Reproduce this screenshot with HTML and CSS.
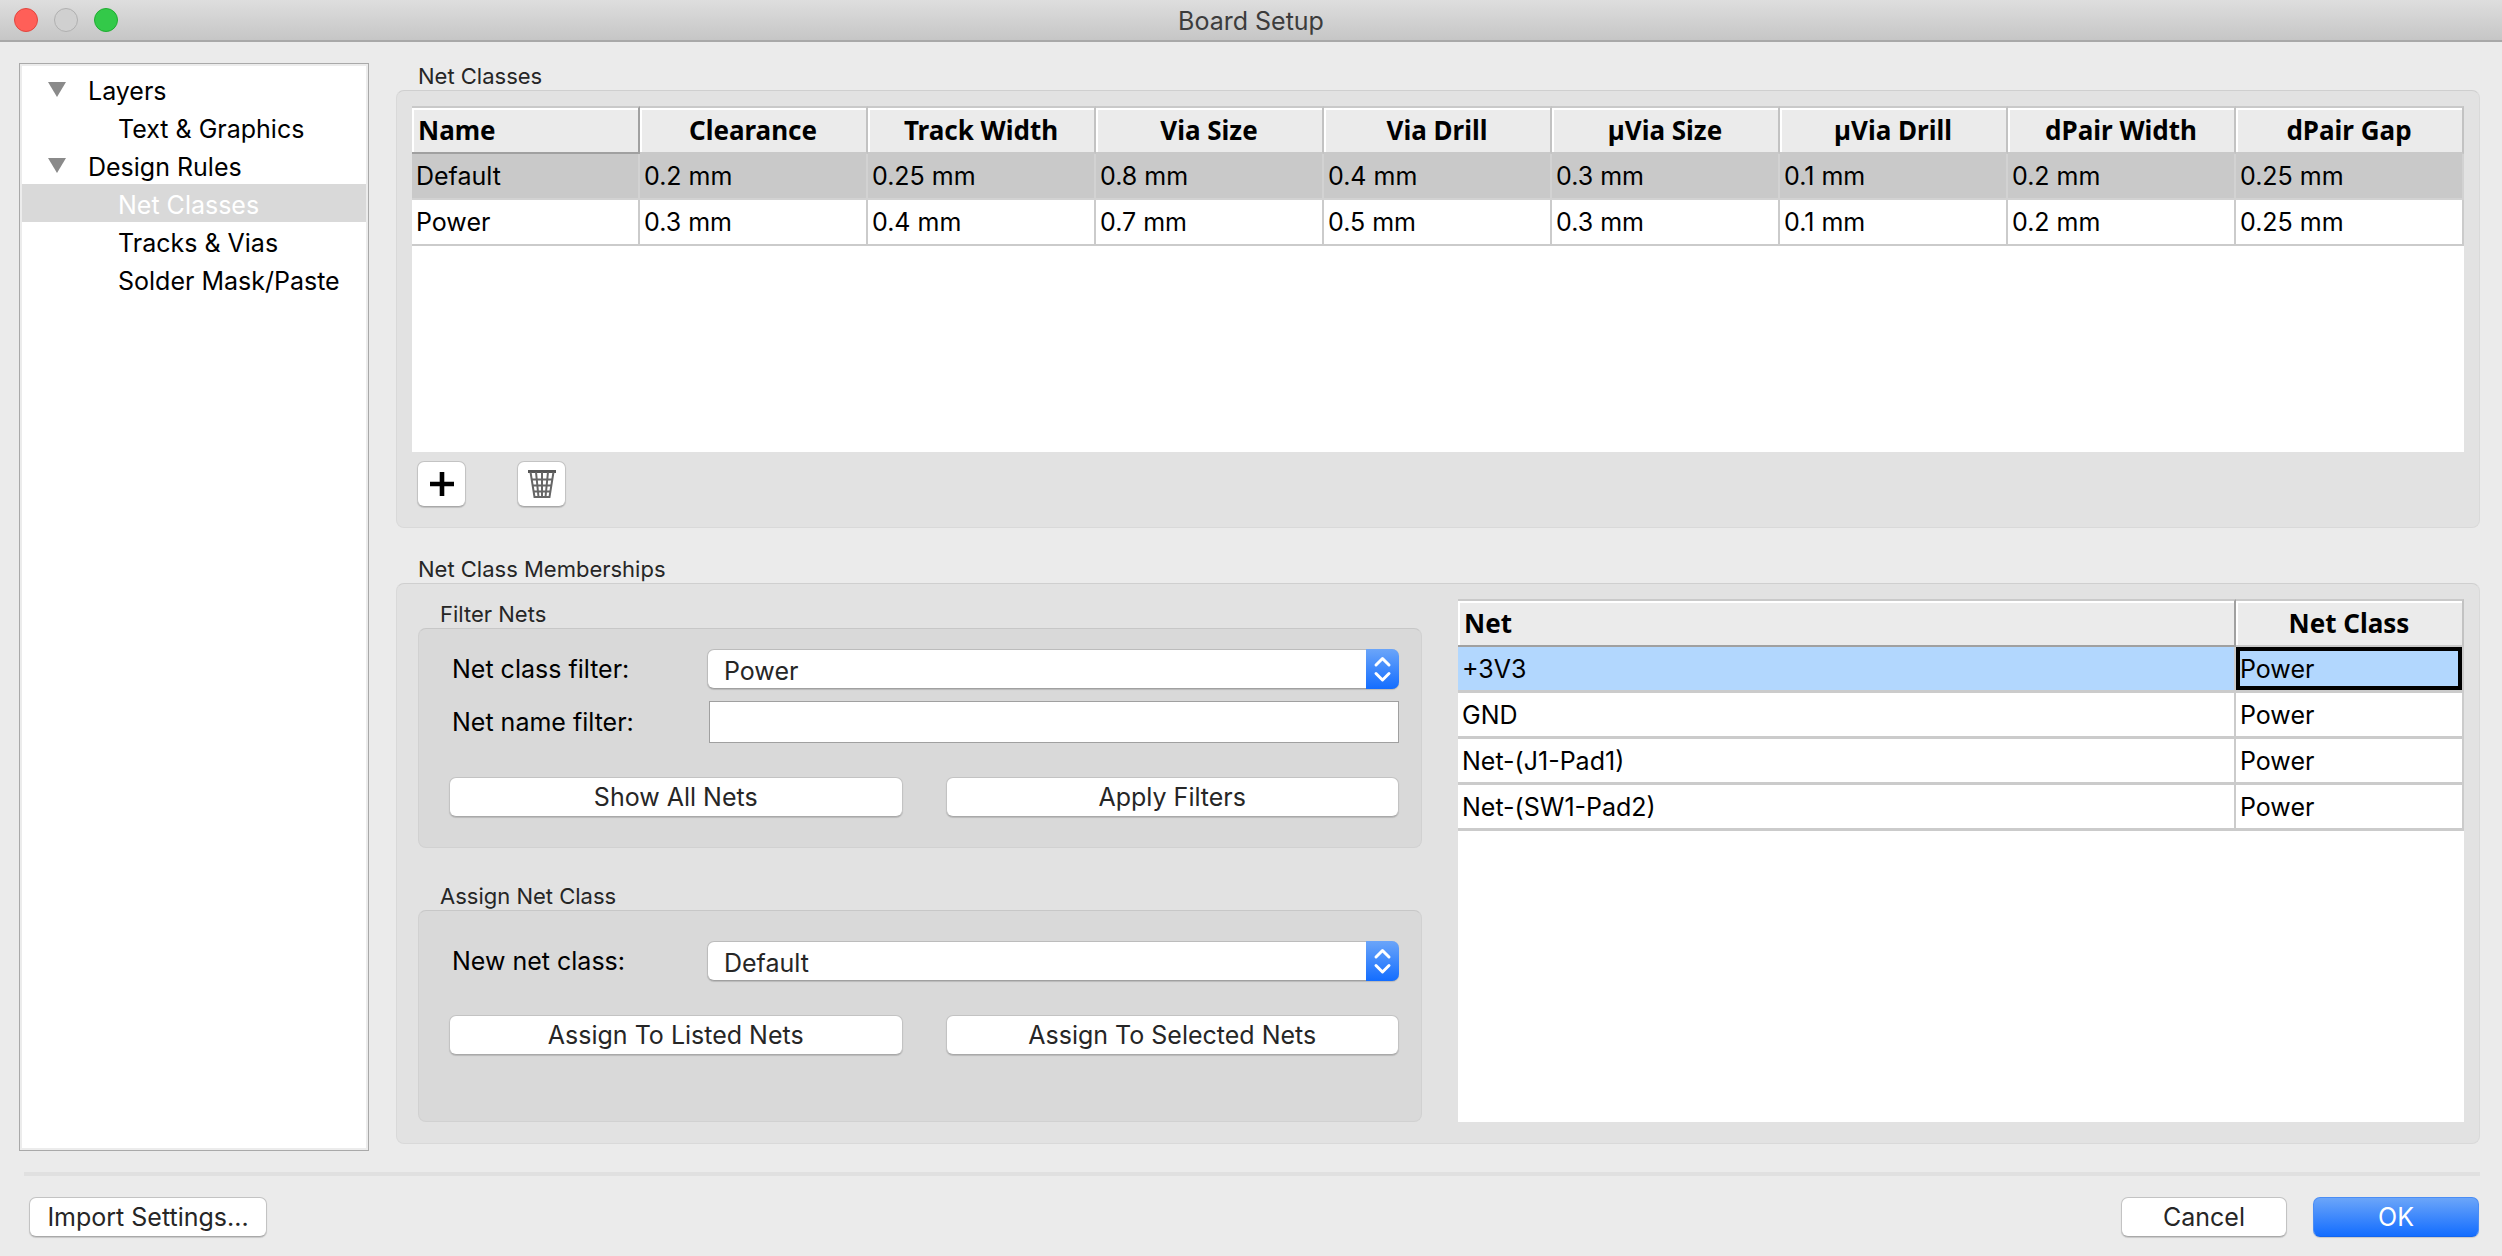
FILE: index.html
```html
<!DOCTYPE html>
<html lang="en">
<head>
<meta charset="utf-8">
<title>Board Setup</title>
<link rel="stylesheet" href="styles.css">
</head>
<body>
<header class="titlebar">
  <div class="lights">
    <button class="light light-close" aria-label="Close"></button>
    <button class="light light-off" aria-label="Minimize" disabled></button>
    <button class="light light-zoom" aria-label="Zoom"></button>
  </div>
  <h1 class="title">Board Setup</h1>
</header>

<main class="content">
  <nav class="tree" aria-label="Settings pages">
    <ul class="tree-list">
      <li>
        <button class="node"><svg class="arrow" viewBox="0 0 18 15"><path d="M0 0H18L9 15Z"/></svg>Layers</button>
        <ul class="tree-list">
          <li><button class="node leaf">Text &amp; Graphics</button></li>
        </ul>
      </li>
      <li>
        <button class="node"><svg class="arrow" viewBox="0 0 18 15"><path d="M0 0H18L9 15Z"/></svg>Design Rules</button>
        <ul class="tree-list">
          <li><button class="node leaf selected" aria-current="page">Net Classes</button></li>
          <li><button class="node leaf">Tracks &amp; Vias</button></li>
          <li><button class="node leaf">Solder Mask/Paste</button></li>
        </ul>
      </li>
    </ul>
  </nav>

  <div class="page">
    <section class="section">
      <h2 class="caption">Net Classes</h2>
      <div class="group classes">
        <div class="sheet classes-sheet">
          <table class="grid classes-grid">
            <thead>
              <tr><th class="current">Name</th><th>Clearance</th><th>Track Width</th><th>Via Size</th><th>Via Drill</th><th>µVia Size</th><th>µVia Drill</th><th>dPair Width</th><th>dPair Gap</th></tr>
            </thead>
            <tbody>
              <tr class="row-selected"><td>Default</td><td>0.2 mm</td><td>0.25 mm</td><td>0.8 mm</td><td>0.4 mm</td><td>0.3 mm</td><td>0.1 mm</td><td>0.2 mm</td><td>0.25 mm</td></tr>
              <tr><td>Power</td><td>0.3 mm</td><td>0.4 mm</td><td>0.7 mm</td><td>0.5 mm</td><td>0.3 mm</td><td>0.1 mm</td><td>0.2 mm</td><td>0.25 mm</td></tr>
            </tbody>
          </table>
        </div>
        <div class="tools">
          <button class="tool" aria-label="Add net class">
            <svg width="28" height="28" viewBox="0 0 28 28"><path d="M14 2V26M2 14H26" stroke="#000" stroke-width="4.600" fill="none"/></svg>
          </button>
          <button class="tool" aria-label="Delete net class">
            <svg width="28" height="28" viewBox="0 0 28 28" fill="none" stroke="#666"><path d="M0 1.500H28" stroke="#555" stroke-width="3"/><path d="M2.500 2L6.500 27H21.500L25.500 2" stroke-width="2"/><path d="M8 2L10.500 27M14 2V27M20 2L17.500 27M3 9.500H25M4 15.500H24M5 21.500H23" stroke-width="2"/></svg>
          </button>
        </div>
      </div>
    </section>

    <section class="section section-fill">
      <h2 class="caption">Net Class Memberships</h2>
      <div class="group members">
        <div class="forms">
          <section class="section">
            <h3 class="caption">Filter Nets</h3>
            <form class="group inner filter">
              <div class="field">
                <label for="class-filter">Net class filter:</label>
                <div class="popup">
                  <select id="class-filter"><option>Power</option><option>Default</option></select>
                  <svg class="cap" viewBox="0 0 33 40"><path d="M10 16L16.500 9.500L23 16M10 24.500L16.500 31L23 24.500"/></svg>
                </div>
              </div>
              <div class="field">
                <label for="name-filter">Net name filter:</label>
                <input class="text" id="name-filter" type="text">
              </div>
              <div class="pair">
                <button class="push" type="button">Show All Nets</button>
                <button class="push" type="button">Apply Filters</button>
              </div>
            </form>
          </section>
          <section class="section section-fill">
            <h3 class="caption">Assign Net Class</h3>
            <form class="group inner assign">
              <div class="field">
                <label for="new-class">New net class:</label>
                <div class="popup">
                  <select id="new-class"><option>Default</option><option>Power</option></select>
                  <svg class="cap" viewBox="0 0 33 40"><path d="M10 16L16.500 9.500L23 16M10 24.500L16.500 31L23 24.500"/></svg>
                </div>
              </div>
              <div class="pair">
                <button class="push" type="button">Assign To Listed Nets</button>
                <button class="push" type="button">Assign To Selected Nets</button>
              </div>
            </form>
          </section>
        </div>
        <div class="sheet nets-sheet">
          <table class="grid nets-grid">
            <colgroup><col><col class="col-class"></colgroup>
            <thead>
              <tr><th class="current">Net</th><th>Net Class</th></tr>
            </thead>
            <tbody>
              <tr class="row-active"><td>+3V3</td><td class="cursor">Power</td></tr>
              <tr><td>GND</td><td>Power</td></tr>
              <tr><td>Net-(J1-Pad1)</td><td>Power</td></tr>
              <tr><td>Net-(SW1-Pad2)</td><td>Power</td></tr>
            </tbody>
          </table>
        </div>
      </div>
    </section>
  </div>
</main>

<footer class="footer">
  <button class="push import">Import Settings...</button>
  <div class="actions">
    <button class="push action">Cancel</button>
    <button class="push action primary">OK</button>
  </div>
</footer>
</body>
</html>
```
FILE: styles.css
```css
* { box-sizing: border-box; }

body {
  margin: 0;
  min-height: 100vh;
  display: flex;
  flex-direction: column;
  background: #ebebeb;
  color: #000;
  font: 25px/38px Inter, "Liberation Sans", sans-serif;
}

button, input, select { font: inherit; color: inherit; margin: 0; }
h1, h2, h3, ul { margin: 0; padding: 0; font-weight: 400; }

/* Title bar */
.titlebar {
  display: grid;
  grid-template-columns: 1fr auto 1fr;
  align-items: center;
  height: 42px;
  padding: 0 14px;
  background: linear-gradient(#dedede, #c6c6c6);
  border-bottom: 2px solid #a8a8a8;
}
.lights { display: flex; gap: 16px; }
.light { width: 24px; height: 24px; padding: 0; border-radius: 50%; border: 1px solid; }
.light-close { background: #ff5f58; border-color: #e2463f; }
.light-off { background: #d0d0d0; border-color: #b0b0b0; }
.light-zoom { background: #33c949; border-color: #1fad31; }
.title { padding-top: 2px; font-size: 25px; color: #3c3c3c; }

.content { flex: 1; display: flex; gap: 27px; padding: 21px 22px 21px 19px; }

/* Page tree */
.tree {
  width: 350px;
  flex: none;
  padding: 6px 2px;
  background: #fff;
  border: 1px solid #a9a9a9;
  box-shadow: inset 0 0 0 2px #ececec;
}
.tree-list { list-style: none; }
.node {
  display: flex;
  width: 100%;
  height: 38px;
  padding: 2px 0 0 26px;
  border: 0;
  background: none;
  text-align: left;
}
.leaf { padding-left: 96px; }
.selected { background: #d9d9d9; color: #fff; }
.arrow { width: 18px; height: 15px; margin: 10px 22px 0 0; fill: #8a8a8a; }

/* Captioned groups */
.page { flex: 1; min-width: 0; display: flex; flex-direction: column; gap: 26px; padding-bottom: 7px; }
.section { display: flex; flex-direction: column; }
.section-fill { flex: 1; }
.caption { padding: 1px 0 0 22px; font-size: 22px; line-height: 28px; color: #262626; }
.page > .section:first-child { margin-top: -2px; }
.group { background: #e2e2e2; border: 1px solid #d9d9d9; border-top-color: #cfcfcf; border-radius: 8px; }
.classes { padding: 15px 15px 16px; }
.members { flex: 1; display: flex; gap: 36px; padding: 15px 15px 21px 21px; }
.inner { background: #d9d9d9; border-color: #d1d1d1; border-top-color: #c7c7c7; }

/* Tables */
.sheet { background: #fff; }
.classes-sheet { min-height: 346px; }
.nets-sheet { flex: 1; }
.grid { width: 100%; table-layout: fixed; border-collapse: separate; border-spacing: 0; }
.grid th {
  height: 48px;
  padding: 2px 0;
  border-top: 2px solid #c9c9c9;
  border-right: 2px solid #c2c2c2;
  border-bottom: 2px solid #c9c9c9;
  background: #ebebeb;
  box-shadow: inset 2px 2px #fff;
  font: 700 26px/38px "Noto Sans", "Open Sans", sans-serif;
}
.grid th.current {
  padding-left: 6px;
  text-align: left;
  border-right-color: #a0a0a0;
  border-bottom-color: #a0a0a0;
}
.grid td {
  height: 46px;
  padding: 0 0 1px 4px;
  border-right: 2px solid #cbcbcb;
  border-bottom: 2px solid #cbcbcb;
}
.row-selected td { background: #c9c9c9; border-color: #d2d2d2; }
.nets-grid td { border-bottom-width: 3px; padding-bottom: 0; }
.nets-grid .col-class { width: 228px; }
.row-active td { background: #b2d7fe; }
.grid .cursor { box-shadow: inset 0 0 0 4px #000; }

.tools { display: flex; gap: 51px; padding: 9px 5px 4px; }

/* Buttons */
.push, .tool {
  border: 1px solid #c3c3c3;
  border-bottom-color: #a9a9a9;
  border-radius: 7px;
  background: #fff;
  box-shadow: 0 1px 1px #00000026;
  padding: 0;
}
.push { height: 40px; line-height: 38px; color: #262626; }
.tool { display: grid; place-items: center; width: 49px; height: 46px; }
.import { width: 238px; }
.action { width: 166px; }
.primary { background: linear-gradient(#6ba5f9, #136dff); border-color: #4a8df5; border-bottom-color: #1265ee; color: #fff; }

/* Forms */
.forms { flex: 0 0 1004px; display: flex; flex-direction: column; gap: 33px; }
.inner { display: flex; flex-direction: column; padding: 20px 22px 0 31px; }
.filter { height: 220px; gap: 12px; }
.assign { flex: 1; gap: 34px; padding-top: 30px; }
.field { display: grid; grid-template-columns: 257px 1fr; align-items: center; padding-left: 2px; }
.popup { position: relative; height: 40px; margin-left: -2px; }
.popup select {
  appearance: none;
  width: 100%;
  height: 40px;
  padding: 2px 40px 0 16px;
  border: 1px solid #bcbcbc;
  border-bottom-color: #a0a0a0;
  border-radius: 7px;
  background: #fff;
  box-shadow: 0 1px 1px #00000026;
  color: #262626;
}
.cap {
  position: absolute;
  top: 0;
  right: 0;
  width: 33px;
  height: 40px;
  border-radius: 0 7px 7px 0;
  background: linear-gradient(#6ba5f9, #136dff);
  fill: none;
  stroke: #fff;
  stroke-width: 3;
  stroke-linecap: round;
  stroke-linejoin: round;
  pointer-events: none;
}
.text { width: 100%; height: 42px; padding: 0 8px; border: 1px solid #a0a0a0; background: #fff; }
.pair { display: grid; grid-template-columns: 1fr 1fr; gap: 43px; margin-left: -1px; }
.filter .pair { margin-top: 22px; }

/* Footer */
.footer {
  display: flex;
  justify-content: space-between;
  align-items: center;
  margin: 0 22px 0 24px;
  padding: 21px 1px 19px 5px;
  border-top: 4px solid #e0e0e0;
}
.actions { display: flex; gap: 26px; }
```
